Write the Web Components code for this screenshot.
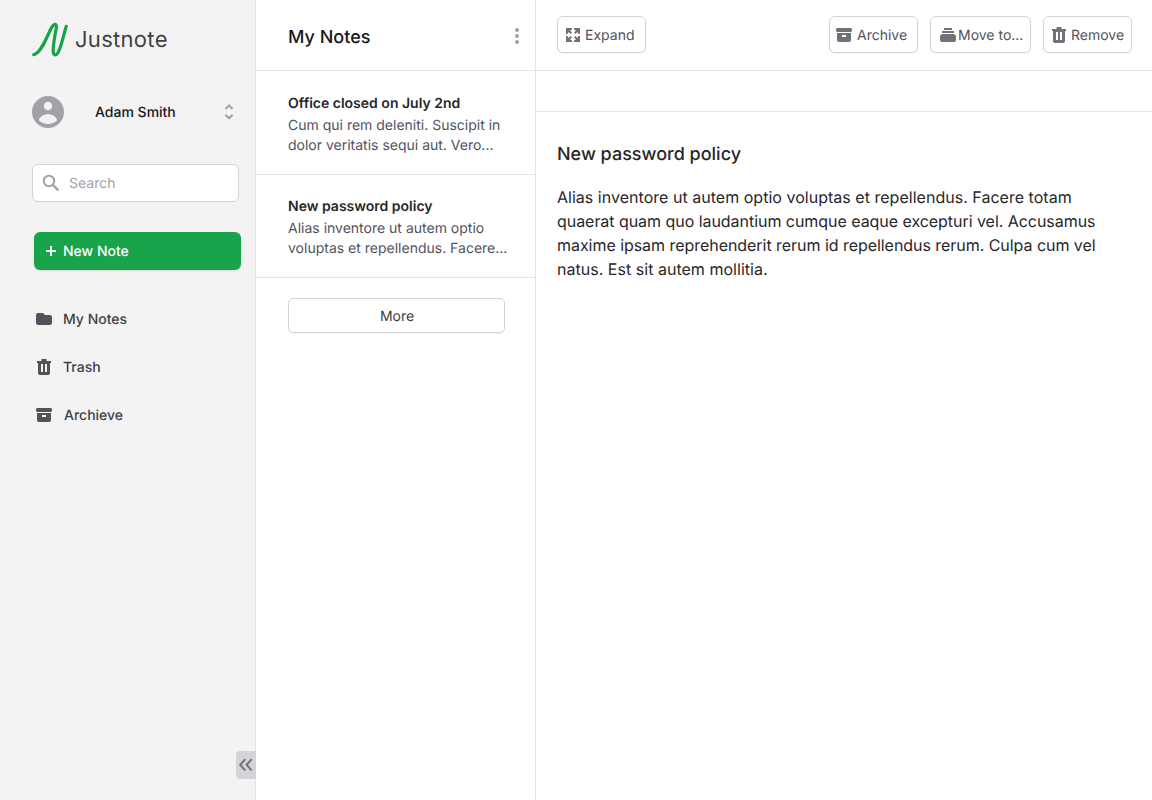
<!DOCTYPE html>
<html lang="en">
<head>
<meta charset="utf-8">
<title>Justnote</title>
<style>
html,body{margin:0;height:100%;background:#fff;overflow:hidden}
body{font-family:Inter,"Liberation Sans",sans-serif;font-size:14px;line-height:20px;color:#18181b;text-rendering:geometricPrecision}
</style>
</head>
<body>
<just-app></just-app>
<script>
const define = (name, render) => customElements.define(name, class extends HTMLElement {
  connectedCallback() {
    if (this.shadowRoot) return;
    const t = document.createElement('template');
    t.innerHTML = render(this);
    this.attachShadow({mode: 'open'}).append(t.content.cloneNode(true));
  }
});

const icons = {
  logo: ['0 0 36 35', '<path d="M1.800 32.600C9.500 31 14.500 15 19.300 6C22.300 0.600 25 1.400 24.200 6.500C22.800 14 20.500 26 21.300 30.500C21.800 33.400 24 33.800 25.800 31C29 26 31.500 13 34.300 4.300" fill="none" stroke="currentColor" stroke-width="3.200" stroke-linecap="round"/>'],
  avatar: ['0 0 32 32', '<path fill-rule="evenodd" d="M16 0a16 16 0 1 0 0 32a16 16 0 0 0 0-32zM16 5.800a4.200 4.200 0 1 1 0 8.400a4.200 4.200 0 0 1 0-8.400zM16 18.300c4.200 0 9 2.700 9 5.900c-4.500 5.100-13.500 5.100-18 0c0-3.200 4.800-5.900 9-5.900z"/>'],
  updown: ['0 0 10 16', '<path d="M1.400 5L5 1.500L8.600 5M1.400 10.800L5 14.300L8.600 10.800" fill="none" stroke="currentColor" stroke-width="2"/>'],
  search: ['0 0 18 18', '<circle cx="7" cy="7" r="5.200" fill="none" stroke="currentColor" stroke-width="2"/><path d="M11 11L16.300 16.300" stroke="currentColor" stroke-width="2.400"/>'],
  plus: ['0 0 10 10', '<path d="M5 0V10M0 5H10" stroke="currentColor" stroke-width="2"/>'],
  folder: ['0 0 16 16', '<path d="M2 2h5l2 2h5a2 2 0 0 1 2 2v6a2 2 0 0 1-2 2H2a2 2 0 0 1-2-2V4a2 2 0 0 1 2-2z"/>'],
  trash: ['0 0 16 16', '<path fill-rule="evenodd" d="M5.500 0h5v2H15v2h-1v10a2 2 0 0 1-2 2H4a2 2 0 0 1-2-2V4H1V2h4.500zM5 5v8h2V5zM9 5v8h2V5z"/>'],
  archive: ['0 0 16 16', '<path fill-rule="evenodd" d="M1.500 1h13A1.500 1.500 0 0 1 16 2.500v1A1.500 1.500 0 0 1 14.500 5h-13A1.500 1.500 0 0 1 0 3.500v-1A1.500 1.500 0 0 1 1.500 1zM1 6h14v7a2 2 0 0 1-2 2H3a2 2 0 0 1-2-2zM6 8v2h4V8z"/>'],
  stack: ['0 0 16 16', '<path d="M4 1h8v2H4zM2 4h12v2H2zM2 7h12l2 2v4a2 2 0 0 1-2 2H2a2 2 0 0 1-2-2V9z"/>'],
  expand: ['0 0 14 14', '<path d="M0 0h6v1.500L4 2.500L6 4.500L4.500 6L2.500 4L1.500 6H0zM8 0h6v6h-1.500L11.500 4L9.500 6L8 4.500L10 2.500L8 1.500zM0 14V8h1.500L2.500 10L4.500 8L6 9.500L4 11.500L6 12.500V14zM14 14H8v-1.500L10 11.500L8 9.500L9.500 8L11.500 10L12.500 8H14z"/>'],
  dots: ['0 0 4 16', '<circle cx="2" cy="2" r="2"/><circle cx="2" cy="8" r="2"/><circle cx="2" cy="14" r="2"/>'],
  collapse: ['0 0 14 14', '<path d="M6.300 1.200L1.200 6.800L6.300 12.400M12.700 1.200L7.600 6.800L12.700 12.400" fill="none" stroke="currentColor" stroke-width="2"/>']
};
define('jn-icon', el => {
  const [box, body] = icons[el.getAttribute('name')];
  const [, , w, h] = box.split(' ');
  return `<style>:host{display:block;flex:none;width:${w}px;height:${h}px}svg{display:block}</style>
  <svg width="${w}" height="${h}" viewBox="${box}" fill="currentColor">${body}</svg>`;
});

define('nav-item', el => `<style>
:host{display:flex;align-items:center;height:20px;padding-left:4px;color:#3f3f46;font-weight:500}
jn-icon{color:#52525b;margin-right:var(--gap,11px)}
span{padding-top:2px}
</style><jn-icon name="${el.getAttribute('icon')}"></jn-icon><span><slot></slot></span>`);

define('tool-button', el => `<style>
:host{display:flex;align-items:center;box-sizing:border-box;height:37px;width:var(--w,89px);padding-left:var(--pad,8px);
border:1px solid #d4d4d8;border-radius:6px;background:#fff;color:#52525b;box-shadow:0 1px 2px rgba(0,0,0,.05);white-space:nowrap}
jn-icon{color:#71717a;margin-right:var(--gap,5px)}
span{padding-top:2px}
</style><jn-icon name="${el.getAttribute('icon')}"></jn-icon><span><slot></slot></span>`);

define('note-card', () => `<style>
:host{display:block;box-sizing:border-box;height:103px;padding:22px 24px 0 32px;border-bottom:1px solid #e4e4e7}
h3{margin:0 0 2px;font-size:14px;line-height:20px;font-weight:600;color:#27272a}
p{margin:0;color:#52525b;white-space:nowrap}
</style><h3><slot name="title"></slot></h3><p><slot></slot></p>`);

define('side-bar', () => `<style>
:host{display:flex;flex-direction:column;box-sizing:border-box;width:256px;height:100%;padding:22px 0 21px 32px;background:#f3f3f3;border-right:1px solid #e4e4e7}
.brand{display:flex;align-items:center;height:35px;color:#16a34a}
.brand span{margin-left:7px;font-size:22px;line-height:32px;color:#3f3f46;letter-spacing:.3px}
.user{display:flex;align-items:center;height:32px;margin-top:39px;color:#a1a1aa}
.user span{margin-left:31px;padding-top:2px;flex:1;color:#18181b;font-weight:500}
.user jn-icon:last-child{margin-right:21px}
.search{display:flex;align-items:center;box-sizing:border-box;width:207px;height:38px;margin-top:36px;padding-left:9px;border:1px solid #d4d4d4;border-radius:6px;background:#fff;color:#a1a1aa}
.search span{margin-left:9px;padding-top:2px}
.new{display:flex;align-items:center;box-sizing:border-box;width:207px;height:38px;margin:30px 0 0 2px;padding-left:12px;border-radius:6px;background:#19a34a;color:#fff;font-weight:500;box-shadow:0 1px 2px rgba(0,0,0,.1)}
.new span{margin-left:7px;padding-top:2px}
nav{display:grid;gap:28px;margin-top:39px}
.fold{display:flex;align-items:center;justify-content:center;align-self:flex-end;box-sizing:border-box;width:20px;height:28px;padding-right:1px;margin-top:auto;margin-right:-1px;border-radius:4px 0 0 4px;background:#d4d4d8;color:#71717a}
</style>
<div class="brand"><jn-icon name="logo"></jn-icon><span>Justnote</span></div>
<div class="user"><jn-icon name="avatar"></jn-icon><span>Adam Smith</span><jn-icon name="updown"></jn-icon></div>
<div class="search"><jn-icon name="search"></jn-icon><span>Search</span></div>
<div class="new"><jn-icon name="plus"></jn-icon><span>New Note</span></div>
<nav><nav-item icon="folder">My Notes</nav-item><nav-item icon="trash">Trash</nav-item><nav-item icon="archive" style="--gap:12px">Archieve</nav-item></nav>
<div class="fold"><jn-icon name="collapse"></jn-icon></div>`);

define('note-list', () => `<style>
:host{display:block;box-sizing:border-box;width:280px;height:100%;border-right:1px solid #e4e4e7}
header{display:flex;align-items:center;justify-content:space-between;box-sizing:border-box;height:71px;padding:2px 16px 0 32px;border-bottom:1px solid #e4e4e7;color:#a1a1aa}
h2{margin:4px 0 0;font-size:18px;line-height:28px;font-weight:500;color:#18181b}
note-card:first-of-type{height:104px;padding-top:23px}
.more{display:flex;align-items:center;justify-content:center;box-sizing:border-box;width:217px;height:35px;margin:20px 0 0 32px;padding:2px 0 0 1px;border:1px solid #d4d4d4;border-radius:5px;color:#3f3f46;box-shadow:0 1px 2px rgba(0,0,0,.05)}
</style>
<header><h2>My Notes</h2><jn-icon name="dots"></jn-icon></header>
<note-card><span slot="title">Office closed on July 2nd</span>Cum qui rem deleniti. Suscipit in<br>dolor veritatis sequi aut. Vero...</note-card>
<note-card><span slot="title">New password policy</span>Alias inventore ut autem optio<br>voluptas et repellendus. Facere...</note-card>
<div class="more">More</div>`);

define('note-view', () => `<style>
:host{display:block;flex:1;min-width:0}
header{display:flex;align-items:center;box-sizing:border-box;height:71px;padding:0 20px 1px 21px;gap:12px;border-bottom:1px solid #e4e4e7}
.gap{flex:1}
.bar{height:40px;border-bottom:1px solid #e4e4e7}
article{padding:29px 21px}
h1{margin:0;font-size:18px;line-height:28px;font-weight:500;color:#27272a}
p{margin:16px 0 0;font-size:16px;line-height:24px;color:#27272a;white-space:nowrap}
.wide{letter-spacing:.025px}
.tight{letter-spacing:-.045px}
</style>
<header><tool-button icon="expand">Expand</tool-button><div class="gap"></div>
<tool-button icon="archive" style="--pad:6px;--gap:5px">Archive</tool-button>
<tool-button icon="stack" style="--w:101px;--pad:9px;--gap:2px">Move to...</tool-button>
<tool-button icon="trash" style="--pad:7px;--gap:4px">Remove</tool-button></header>
<div class="bar"></div>
<article><h1>New password policy</h1>
<p><span class="wide">Alias inventore ut autem optio voluptas et repellendus. Facere totam</span><br><span class="tight">quaerat quam quo laudantium cumque eaque excepturi vel. Accusamus</span><br><span class="tight">maxime ipsam reprehenderit rerum id repellendus rerum. Culpa cum vel</span><br><span class="wide">natus. Est sit autem mollitia.</span></p></article>`);

define('just-app', () => `<style>:host{display:flex;width:1152px;height:800px;overflow:hidden}</style>
<side-bar></side-bar><note-list></note-list><note-view></note-view>`);
</script>
</body>
</html>
